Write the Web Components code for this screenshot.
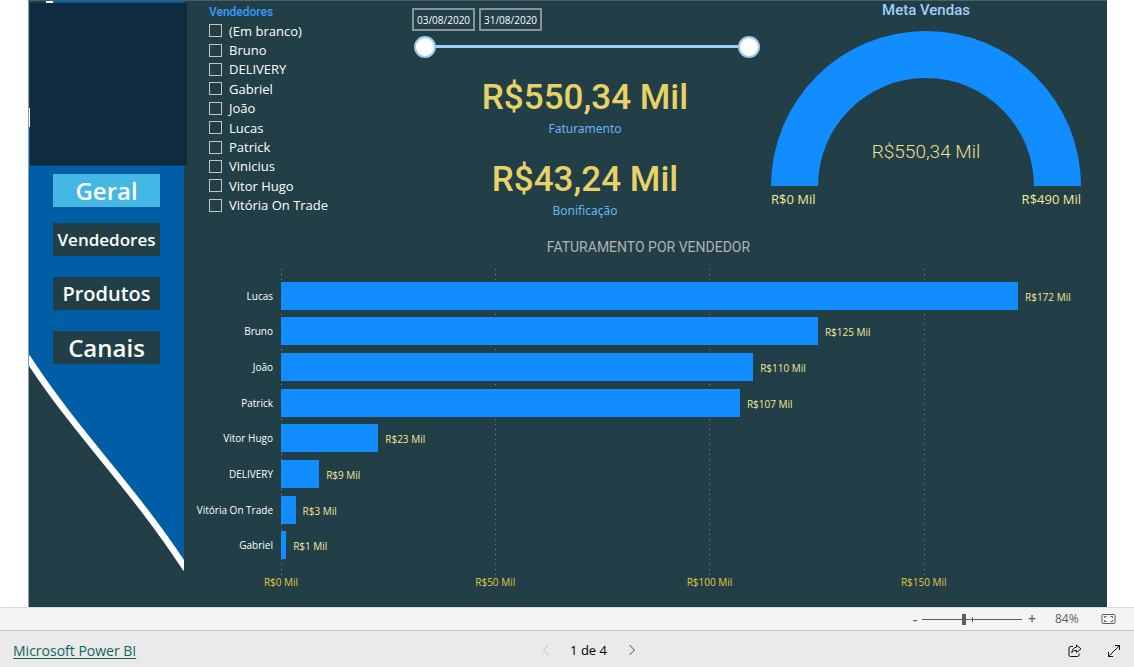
<!DOCTYPE html>
<html lang="pt-BR">
<head>
<meta charset="utf-8">
<title>Relatório de vendas</title>
<style>
  html { height: 100%; }
  body { margin: 0; min-height: 100%; background: #fff; font-family: "Open Sans", "Noto Sans", sans-serif; }
</style>
</head>
<body>
<sales-app></sales-app>

<script>
const define = (name, html, setup) => {
  customElements.define(name, class extends HTMLElement {
    constructor() {
      super();
      this.attachShadow({ mode: 'open' });
    }
    connectedCallback() {
      if (this.shadowRoot.childNodes.length) return;
      const t = document.createElement('template');
      t.innerHTML = html;
      this.shadowRoot.append(t.content.cloneNode(true));
      if (setup) setup(this, this.shadowRoot);
    }
  });
};

define('nav-item', `
  <style>
    :host { display: block; }
    button { display: block; width: 100%; height: 33px; padding: 0; border: 0; background: #223e46; color: #fff;
      font: 600 17px/33px "Open Sans", "Noto Sans", sans-serif; text-align: center; white-space: nowrap; cursor: pointer; }
    :host([size="m"]) button { font-size: 20px; }
    :host([size="l"]) button { font-size: 24px; line-height: 31px; }
    :host([active]) button { background: #43b8e4; }
  </style>
  <button type="button"><slot></slot></button>`);

define('nav-rail', `
  <style>
    :host { display: grid; }
    svg, .content { grid-area: 1 / 1; }
    svg { width: 155px; height: 606px; display: block; }
    .content { z-index: 1; }
    .logo { height: 163px; margin: 2px -3px 8px 1px; background: #0f2b40; border-bottom: 1px solid #0a3d66; box-sizing: border-box; }
    nav { display: flex; flex-direction: column; gap: 21px; padding: 0 24px; }
    nav [active] { margin-bottom: -5px; }
  </style>
  <svg viewBox="0 0 155 606" aria-hidden="true">
    <path d="M0 126V359C49 434 105 488 155 565V0H24V3H2V126Z" fill="#005ea6"/>
    <path d="M17 0H24V3H17ZM0 107H2V126H0Z" fill="#fff"/>
    <path d="M-2 356L0 359C49 434 105 488 155 565L157 568" fill="none" stroke="#fff" stroke-width="6.500"/>
  </svg>
  <div class="content">
    <div class="logo"></div>
    <nav>
      <nav-item size="l" active>Geral</nav-item>
      <nav-item>Vendedores</nav-item>
      <nav-item size="m">Produtos</nav-item>
      <nav-item size="l">Canais</nav-item>
    </nav>
  </div>`);

define('seller-slicer', `
  <style>
    :host { display: block; padding: 2px 0 0 25px; }
    h2 { margin: 0; font: 500 12px/18px Roboto, sans-serif; color: #3a9bfb; }
    ul { margin: 0; padding: 0; list-style: none; height: 194px; display: grid; grid-auto-rows: 1fr; align-items: center; }
    label { display: flex; align-items: center; gap: 7px; color: #fff; font-size: 13px; line-height: 18px; white-space: nowrap; }
    input { appearance: none; width: 13px; height: 13px; margin: 0; border: 1px solid #c4c4c8; }
    input:checked { background: #3a9bfb; }
  </style>
  <h2>Vendedores</h2>
  <ul></ul>`, (host, root) => {
    root.querySelector('ul').innerHTML =
      ['(Em branco)', 'Bruno', 'DELIVERY', 'Gabriel', 'João', 'Lucas', 'Patrick', 'Vinicius', 'Vitor Hugo', 'Vitória On Trade']
        .map(n => `<li><label><input type="checkbox"><span>${n}</span></label></li>`).join('');
  });

define('date-range', `
  <style>
    :host { display: block; padding-top: 7px; }
    .dates { display: flex; gap: 4px; padding-left: 1px; }
    .dates input { box-sizing: border-box; width: 63px; height: 23px; border: 2px solid #87949a; background: transparent;
      color: #fff; padding: 0 3px; margin: 0; font: 10px/18px "Open Sans", sans-serif; outline: 0; }
    .range { display: grid; margin: 5px -1px 0 3px; height: 22px; align-items: center;
      background: linear-gradient(#9fd0fb, #9fd0fb) center 9px / calc(100% - 20px) 3px no-repeat; }
    .range input { grid-area: 1 / 1; appearance: none; width: 100%; height: 22px; margin: 0; background: none; pointer-events: none; }
    .range input::-webkit-slider-thumb { appearance: none; box-sizing: border-box; width: 22px; height: 22px; border-radius: 50%;
      background: #fff; border: 2px solid #9fc8f0; pointer-events: auto; }
  </style>
  <div class="dates">
    <input type="text" value="03/08/2020" aria-label="Data inicial">
    <input type="text" value="31/08/2020" aria-label="Data final">
  </div>
  <div class="range">
    <input type="range" min="3" max="31" value="3" aria-label="Início do período">
    <input type="range" min="3" max="31" value="31" aria-label="Fim do período">
  </div>`);

define('kpi-card', `
  <style>
    :host { display: block; text-align: center; }
    .value { font: 500 35px/42px Roboto, sans-serif; color: #e8d166; }
    .label { font: 12px/20px "Noto Sans", sans-serif; color: #6cb4f8; }
  </style>
  <div class="value"><slot name="value"></slot></div>
  <div class="label"><slot></slot></div>`);

define('gauge-meter', `
  <style>
    :host { display: block; padding: 0 26px 0 12px; }
    h2 { margin: 0; font: 500 15px/18px Roboto, sans-serif; color: #9fd0fb; text-align: center; }
    .dial { display: grid; margin-top: 12px; }
    svg, .value { grid-area: 1 / 1; }
    svg { display: block; width: 100%; }
    .value { place-self: end center; margin-bottom: 20px; font: 300 19px/28px Roboto, sans-serif; color: #ecdf8e; }
    .ends { display: flex; justify-content: space-between; font-size: 13px; line-height: 16px; margin-top: 5px; color: #f4e79a; }
  </style>
  <h2>Meta Vendas</h2>
  <div class="dial">
    <svg viewBox="0 0 310 155" aria-hidden="true">
      <path d="M0 155A155 155 0 0 1 310 155H263A108 108 0 0 0 47 155Z" fill="#118dff"/>
    </svg>
    <div class="value">R$550,34 Mil</div>
  </div>
  <div class="ends"><span>R$0 Mil</span><span>R$490 Mil</span></div>`);

define('bar-chart', `
  <style>
    :host { display: block; padding-right: 89px; }
    h2 { margin: 0 -89px 0 0; padding-left: 6px; font: 14px/20px Roboto, sans-serif; color: #b0b3b3; text-align: center; }
    .chart { display: grid; grid-template-columns: 89px 1fr; column-gap: 8px; margin-top: 12px; }
    .grid, .rows { grid-row: 1; }
    .grid { grid-column: 2; }
    .grid, .axis { display: grid; grid-template-columns: 50fr 50fr 50fr 22fr; }
    .grid i { width: 1px; background: repeating-linear-gradient(#7b8c91 0 1px, transparent 1px 5px); }
    .rows { grid-column: 1 / 3; margin: 9px 0 12px; height: 285px; display: grid; grid-auto-rows: 1fr; z-index: 1; }
    .row { display: grid; grid-template-columns: 89px 1fr; column-gap: 8px; align-items: center; font-size: 10px; line-height: 14px; white-space: nowrap; }
    .name { text-align: right; color: #fff; }
    .track { display: flex; align-items: center; }
    .bar { flex: none; height: 28px; background: #118dff; }
    .val { margin-left: 7px; padding-top: 2px; width: 0; color: #f4e79a; }
    .axis { grid-column: 2; font-size: 10px; line-height: 14px; color: #e3c93f; }
    .axis span { width: 0; display: flex; justify-content: center; white-space: nowrap; }
  </style>
  <h2>FATURAMENTO POR VENDEDOR</h2>
  <div class="chart">
    <div class="grid"><i></i><i></i><i></i><i></i></div>
    <div class="rows"></div>
    <div class="axis"><span>R$0 Mil</span><span>R$50 Mil</span><span>R$100 Mil</span><span>R$150 Mil</span></div>
  </div>`, (host, root) => {
    const max = 172;
    const data = [['Lucas', 172], ['Bruno', 125.3], ['João', 110.2], ['Patrick', 107.1],
      ['Vitor Hugo', 22.7], ['DELIVERY', 8.9], ['Vitória On Trade', 3.4], ['Gabriel', 1.2]];
    root.querySelector('.rows').innerHTML = data.map(([name, v]) =>
      `<div class="row"><span class="name">${name}</span><div class="track"><div class="bar" style="width:calc(100% * ${v} / ${max})"></div><span class="val">R$${Math.round(v)} Mil</span></div></div>`).join('');
  });

define('sales-report', `
  <style>
    :host { display: grid; grid-template-columns: 155px 1fr; background: #223e46; margin: 0 27px 0 28px; border-left: 1px solid #8b9ea6; border-top: 1px solid #46606a; box-sizing: border-box; }
    .top { display: grid; grid-template-columns: 227px 1fr 1fr; height: 236px; }
    .kpis { display: grid; gap: 20px; margin-top: 19px; }
  </style>
  <nav-rail></nav-rail>
  <main>
    <div class="top">
      <seller-slicer></seller-slicer>
      <div>
        <date-range></date-range>
        <div class="kpis">
          <kpi-card><span slot="value">R$550,34 Mil</span>Faturamento</kpi-card>
          <kpi-card><span slot="value">R$43,24 Mil</span>Bonificação</kpi-card>
        </div>
      </div>
      <gauge-meter></gauge-meter>
    </div>
    <bar-chart></bar-chart>
  </main>`);

define('zoom-bar', `
  <style>
    :host { display: flex; justify-content: flex-end; align-items: center; height: 22px; padding-right: 18px;
      background: #f4f4f4; border-top: 1px solid #dcdcdc; color: #605e5c; }
    button { border: 0; background: none; padding: 0; margin: 0; color: inherit; font: 600 14px/20px "Open Sans", sans-serif; width: 14px; height: 20px; cursor: pointer; }
    input { appearance: none; width: 100px; height: 12px; margin: 0 3px 0 0;
      background: linear-gradient(#605e5c, #605e5c) 0 6px / 100% 1px no-repeat, linear-gradient(#605e5c, #605e5c) 50px 4px / 1px 5px no-repeat; }
    input::-webkit-slider-thumb { appearance: none; width: 4px; height: 11px; background: #605e5c; }
    output { width: 24px; margin: 0 22px 0 16px; font-size: 12px; line-height: 20px; letter-spacing: normal; }
    .fit { width: 15px; }
    svg { display: block; }
  </style>
  <button type="button" aria-label="Reduzir">-</button>
  <input type="range" min="0" max="200" value="84" aria-label="Zoom">
  <button type="button" aria-label="Ampliar">+</button>
  <output>84%</output>
  <button type="button" class="fit" aria-label="Ajustar à página">
    <svg width="15" height="20" viewBox="0 0 15 20" fill="none" stroke="#605e5c">
      <rect x="1" y="5.500" width="13" height="9" rx="1"/>
      <path d="M5.500 7.500H3.500V9M3.500 11V12.500H5.500M9.500 7.500H11.500V9M11.500 11V12.500H9.500"/>
    </svg>
  </button>`);

define('page-bar', `
  <style>
    :host { display: grid; grid-template-columns: minmax(0, 525fr) auto minmax(0, 482fr); align-items: center; height: 36px;
      padding: 0 13px; background: #eaeaea; border-top: 1px solid #c6c6c6; }
    a { justify-self: start; color: #0b665c; font-size: 14px; line-height: 20px; padding-top: 3px; text-decoration: underline; text-underline-offset: 2px; }
    .pager { display: flex; align-items: center; justify-content: space-between; width: 100px; font-size: 13px; line-height: 20px; color: #000; padding-top: 2px; }
    .tools { display: flex; justify-content: flex-end; gap: 25px; padding-top: 3px; }
    button { border: 0; background: none; padding: 0; width: 14px; height: 14px; cursor: pointer; }
    svg { display: block; fill: none; stroke: #111; }
    button:disabled svg { stroke: #bdbdbd; }
    .next svg { stroke: #444; }
  </style>
  <a href="#">Microsoft Power BI</a>
  <div class="pager">
    <button type="button" disabled aria-label="Página anterior"><svg width="14" height="14" viewBox="0 0 14 14"><path d="M9.500 2L4.500 7L9.500 12"/></svg></button>
    <span>1 de 4</span>
    <button type="button" class="next" aria-label="Próxima página"><svg width="14" height="14" viewBox="0 0 14 14"><path d="M4.500 2L9.500 7L4.500 12"/></svg></button>
  </div>
  <div class="tools">
    <button type="button" aria-label="Compartilhar"><svg width="14" height="14" viewBox="0 0 14 14"><path d="M5 2.500H2.500A1.500 1.500 0 0 0 1 4V11A1.500 1.500 0 0 0 2.500 12.500H9.500A1.500 1.500 0 0 0 11 11V9.500"/><path d="M8.500 1L13 4.800L8.500 8.500V6.400C6.300 6.400 4.900 7 3.800 8.700C4.100 5.700 5.600 3.500 8.500 3.200Z"/></svg></button>
    <button type="button" aria-label="Tela inteira"><svg width="14" height="14" viewBox="0 0 14 14"><path d="M1.500 12.500L12.500 1.500M8 1.500H12.500V6M1.500 8V12.500H6"/></svg></button>
  </div>`);

define('sales-app', `
  <style>
    :host { display: flex; flex-direction: column; min-height: 100vh; }
    sales-report { flex: 1; }
  </style>
  <sales-report></sales-report>
  <zoom-bar></zoom-bar>
  <page-bar></page-bar>`);
</script>
</body>
</html>
